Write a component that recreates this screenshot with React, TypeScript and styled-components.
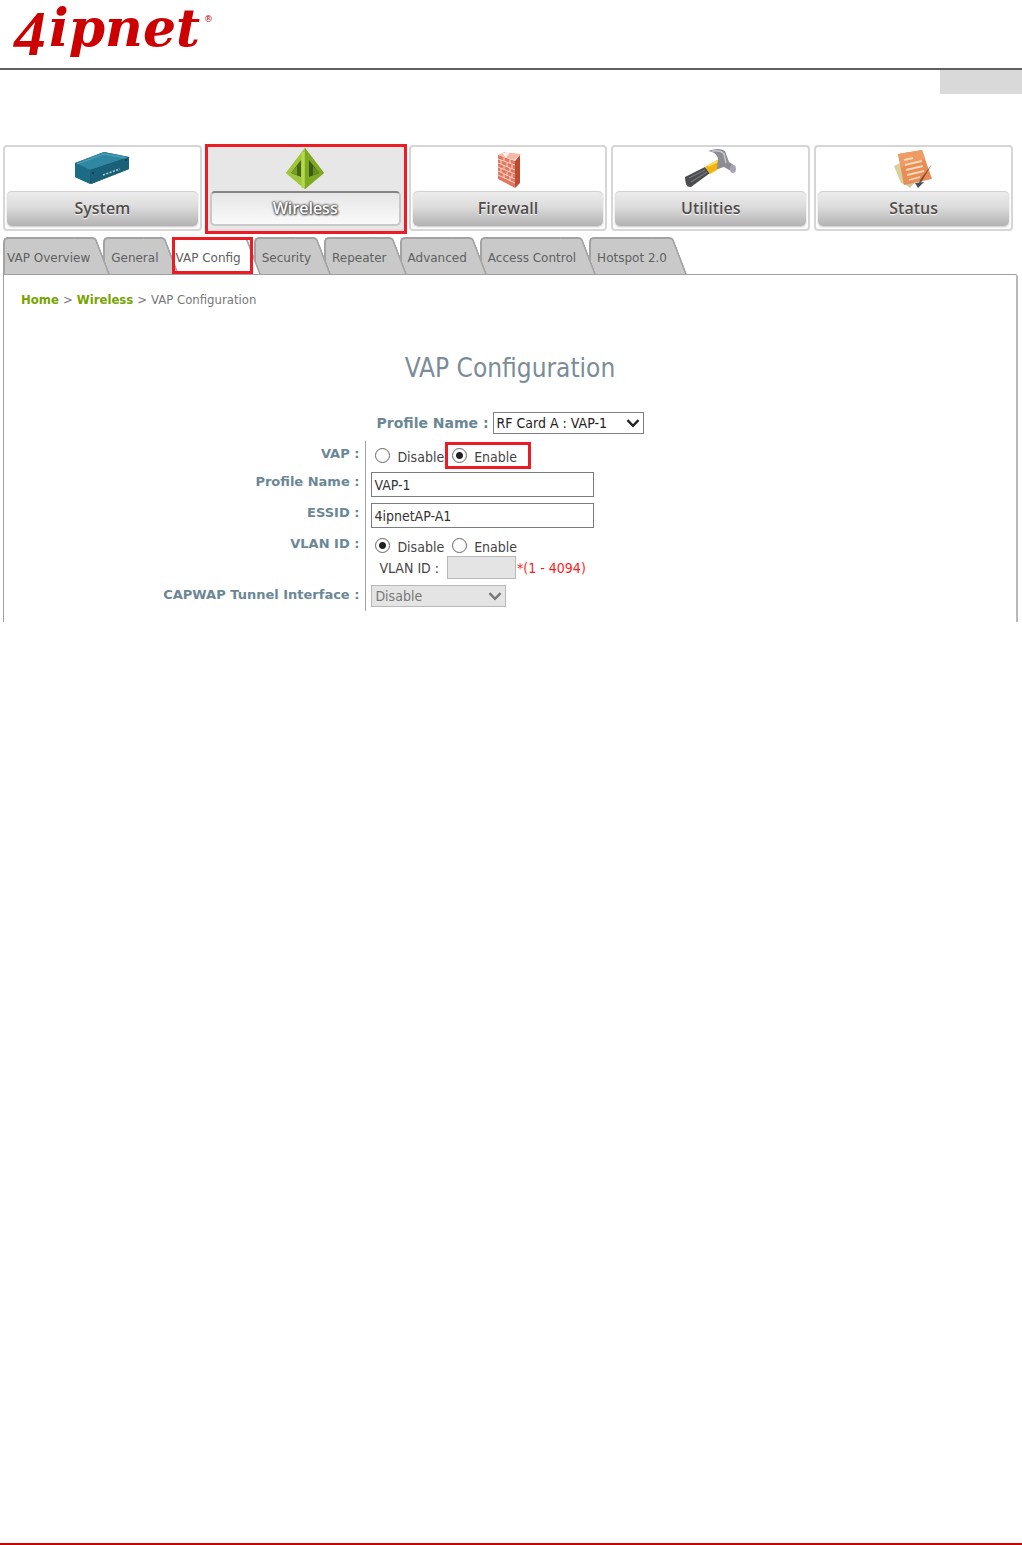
import React, { useState } from 'react';
import styled, { createGlobalStyle, css } from 'styled-components';

const ui = '"DejaVu Sans Condensed", "Noto Sans", sans-serif';
const uiWide = '"DejaVu Sans", sans-serif';
const accent = '#ed1c24';

const GlobalStyle = createGlobalStyle`
  * { box-sizing: border-box; }
  body { margin: 0; background: #fff; font-family: "Noto Sans", sans-serif; }
  button, input, select { font: inherit; color: inherit; margin: 0; }
`;

const Page = styled.div`
  display: flex;
  flex-direction: column;
  min-height: 100vh;
`;

const Header = styled.header`
  display: flex;
  padding-left: 13px;
  height: 70px;
  border-bottom: 2px solid #5f5f5f;
`;

const Logo = styled.svg`
  display: block;
  width: 204px;
  height: 68px;
  overflow: visible;
  fill: #cc0000;
  font-family: "DejaVu Serif", serif;
  font-weight: bold;
  font-style: italic;
`;

const PageTag = styled.div`
  align-self: flex-end;
  width: 82px;
  height: 24px;
  background: #d9d9d9;
`;

const Main = styled.main`
  padding: 51px 4px 0 3px;
`;

const Nav = styled.nav`
  display: grid;
  grid-template-columns: repeat(5, 1fr);
  gap: 4px;
  padding-right: 5px;
`;

const NavCard = styled.button<{ $active?: boolean }>`
  position: relative;
  display: flex;
  flex-direction: column;
  align-items: stretch;
  height: 86px;
  padding: 0 2px;
  border: 2px solid #d6d6d6;
  border-radius: 4px;
  background: #fff;
  cursor: pointer;
  ${(p) =>
    p.$active &&
    css`
      background: #e7e7e7;
      border-color: #e0e0e0;
      &::after {
        content: '';
        position: absolute;
        inset: -3px -4px -5px -3px;
        border: 3px solid ${accent};
      }
    `}
`;

const NavIcon = styled.svg`
  display: block;
  width: 60px;
  height: 44px;
  margin: 0 auto;
  flex: none;
`;

const NavLabel = styled.span<{ $active?: boolean }>`
  display: block;
  height: 35px;
  border-radius: 5px;
  font: 600 16px/35px "Open Sans", sans-serif;
  color: #504c4a;
  background: linear-gradient(#ededed, #dcdcdc 45%, #b2b2b2);
  box-shadow: 0 1px 2px #c4c4c4, inset 0 1px 0 #d2d2d2;
  text-shadow: 0 1px 1px #fff;
  ${(p) =>
    p.$active &&
    css`
      color: #fff;
      background: linear-gradient(#e6e6e6, #fafafa);
      border: 2px solid #c8c8c8;
      border-top-color: #858585;
      line-height: 30px;
      box-shadow: none;
      text-shadow: 0 0 2px #444, 0 0 2px #555, 1px 1px 2px #555, 0 0 3px #777;
    `}
`;

const Tabs = styled.div`
  display: flex;
  height: 37px;
  margin-top: 6px;
  position: relative;
  z-index: 0;
`;

const TabSlot = styled.div`
  position: relative;
`;

const Tab = styled.button<{ $active?: boolean; $tight?: boolean; $order: number }>`
  --fill: ${(p) => (p.$active ? '#fff' : '#c9c9c9')};
  --edge: #a3a3a3;
  display: block;
  position: relative;
  z-index: ${(p) => p.$order};
  height: 37px;
  padding: ${(p) => (p.$tight ? '2px 13px 0 4px' : '2px 13px 0 8px')};
  border: 0;
  background: none;
  font: 12px/38px ${uiWide};
  color: #606060;
  white-space: nowrap;
  cursor: pointer;
  &::before,
  &::after {
    content: '';
    position: absolute;
    z-index: -1;
    top: 0;
    bottom: 0;
    background: var(--fill);
    border-top: 2px solid var(--edge);
  }
  &::before {
    left: 0;
    right: 12px;
    border-left: 2px solid var(--edge);
    border-top-left-radius: 5px;
  }
  &::after {
    right: 0;
    width: 20px;
    border-right: 2px solid var(--edge);
    border-top-right-radius: 4px;
    transform: skewX(21deg);
  }
`;

const TabMark = styled.span`
  position: absolute;
  z-index: 20;
  inset: 0 1px 0 0;
  border: 3px solid ${accent};
  pointer-events: none;
`;

const Panel = styled.section`
  height: 348px;
  border: 1px solid #a0a0a0;
  border-right: 2px solid #b8b8b8;
  border-bottom: 0;
  border-top-right-radius: 3px;
`;

const Crumbs = styled.nav`
  display: flex;
  gap: 4px;
  padding: 15px 17px 0;
  font: 13px/20px ${ui};
  color: #777;
`;

const CrumbLink = styled.a`
  color: #78a300;
  font-weight: bold;
  text-decoration: none;
`;

const Title = styled.h1`
  margin: 38px 0 0;
  text-align: center;
  font: 26px/40px ${ui};
  color: #7b8c99;
`;

const ProfileRow = styled.div`
  display: flex;
  justify-content: center;
  align-items: center;
  gap: 4px;
  height: 22px;
  margin-top: 24px;
`;

const Caption = styled.label<{ $large?: boolean }>`
  font: bold ${(p) => (p.$large ? 14 : 13)}px/20px ${uiWide};
  color: #6b8796;
`;

const SelectBox = styled.div<{ $width: number; $muted?: boolean }>`
  position: relative;
  width: ${(p) => p.$width}px;
  height: 22px;
  font: 14px/20px ${ui};
  color: ${(p) => (p.$muted ? '#777' : '#222')};
  select {
    appearance: none;
    width: 100%;
    height: 22px;
    padding: 0 3px;
    border: 1px solid ${(p) => (p.$muted ? '#b8b8b8' : '#808080')};
    border-radius: 0;
    background: ${(p) => (p.$muted ? '#e4e4e4' : '#fff')};
    opacity: 1;
  }
  svg {
    position: absolute;
    top: 7px;
    right: 4px;
    pointer-events: none;
  }
`;

const Form = styled.form`
  margin-top: 7px;
`;

const Row = styled.div<{ $first?: boolean }>`
  display: grid;
  grid-template-columns: 5fr 9fr;
  && > * { padding-top: ${(p) => (p.$first ? 3 : 0)}px; }
`;

const LabelCell = styled.div`
  padding: 0 6px 6px 0;
  text-align: right;
  color: #6b8796;
  font: bold 13px/20px ${uiWide};
`;

const ValueCell = styled.div`
  padding: 0 0 6px 5px;
  border-left: 1px solid #a6a6a6;
`;

const LastValueCell = styled(ValueCell)`
  padding-bottom: 3px;
`;

const TextBox = styled.input`
  display: block;
  width: 223px;
  height: 25px;
  padding: 0 2px;
  border: 1px solid #7c7c7c;
  border-radius: 0;
  font: 14px/20px ${ui};
  color: #333;
`;

const Choices = styled.div`
  display: flex;
  height: 22px;
`;

const Choice = styled.label`
  position: relative;
  display: flex;
  align-items: center;
  gap: 7px;
  padding-left: 4px;
  margin-right: 4px;
  font: 14px/22px ${ui};
  color: #444;
  span { padding-top: 4px; }
  input {
    appearance: none;
    width: 15px;
    height: 15px;
    border: 1px solid #666;
    border-radius: 50%;
    background: #fff;
  }
  input:checked {
    background: radial-gradient(circle, #222 0 3px, #fff 4px);
  }
`;

const ChoiceMark = styled.i`
  position: absolute;
  inset: -2px -14px -3px -3px;
  border: 3px solid ${accent};
`;

const SubField = styled.div`
  display: flex;
  align-items: center;
  height: 23px;
  padding-left: 8px;
  font: 14px/22px ${ui};
  color: #444;
  input {
    width: 69px;
    height: 23px;
    margin: 0 1px 0 8px;
    border: 1px solid #b8b8b8;
    background: #e4e4e4;
  }
`;

const Hint = styled.span`
  color: #ff1a1a;
`;

const Footer = styled.footer`
  margin-top: auto;
  border-top: 2px solid #d00000;
`;

const Chevron = ({ color }: { color: string }) => (
  <svg width="14" height="9" viewBox="0 0 14 9" fill="none" stroke={color} strokeWidth="2.4">
    <path d="M1.5 1.2 7 6.8l5.500-5.600" />
  </svg>
);

const RouterIcon = () => (
  <NavIcon viewBox="0 0 60 44">
    <path d="M3 16 32 5l25 5v12L19 37 3 30z" fill="#17586d" />
    <path d="M3 16 32 5l25 5L18 23z" fill="#2f87a2" />
    <path d="M3 16l15 7v14L3 30z" fill="#1d6c86" />
    <path d="M18 23 57 10v12L19 37z" fill="#1b6079" />
    <path d="M31 28 48 22" stroke="#a9d3c8" strokeWidth="1.600" strokeDasharray="2 1.500" />
    <circle cx="21" cy="26" r="1" fill="#0c3543" />
    <circle cx="54" cy="13" r="1" fill="#0c3543" />
    <path d="M5 17 32 7l22 4" stroke="#53a6bd" fill="none" />
  </NavIcon>
);

const WirelessIcon = () => (
  <NavIcon viewBox="0 0 60 44">
    <path d="M30 1 49 26 30 42 11 26z" fill="#92bd2d" />
    <path d="M30 1 11 26l19 16z" fill="#9fc63c" />
    <path d="M30 1 49 26 30 42z" fill="#7fa823" />
    <path d="M26 13v17l-10-4z" fill="#47661a" />
    <path d="M34 13v17l10-4z" fill="#3c5a14" />
    <path d="M22 19v9l-6-2z" fill="#789d2b" />
    <path d="M38 19v9l6-2z" fill="#6a8d22" />
    <path d="M28 5v36" stroke="#b4d84f" strokeWidth="3" />
  </NavIcon>
);

const FirewallIcon = () => (
  <NavIcon viewBox="0 0 60 44">
    <path d="M20 8 26 5 43 7 36 13z" fill="#f5b7a6" />
    <path d="M20 8l17 6v27L20 32z" fill="#e2775f" />
    <path d="M37 14l5-6v28l-5 5z" fill="#bf4a32" />
    <g stroke="#fbd6ca" strokeWidth="1" fill="none">
      <path d="M20 12l17 6M20 16l17 7M20 20l17 7M20 24l17 8M20 28l17 8" />
      <path d="M26 10v4M32 12v4M23 13v4M29 16v4M34 18v4M26 18v4M32 21v4M23 21v4M29 25v4M34 27v4M26 27v4M32 30v4" />
    </g>
    <path d="M24 6l4 5 4-6z" fill="#fff" opacity=".75" />
  </NavIcon>
);

const HammerIcon = () => (
  <NavIcon viewBox="0 0 60 44">
    <path d="M4 30 24 20 29 26 10 40Q4 41 4 30z" fill="#4c4d50" />
    <path d="M8 31 24 23M10 35 26 25" stroke="#77787a" strokeWidth="1.200" />
    <path d="M24 20 36 13l5 7-12 7z" fill="#f2b211" />
    <path d="M27 19 37 14" stroke="#ffdc5c" strokeWidth="2" />
    <path d="M27 4Q38 0 44 4L48 15 54 19 50 24 43 20 36 22 37 11Q35 5 27 4z" fill="#8b8d92" />
    <path d="M31 4Q40 3 43 7L45 16" stroke="#c6c8cc" strokeWidth="1.500" fill="none" />
    <ellipse cx="52" cy="22" rx="3" ry="4" fill="#aaa4b8" />
  </NavIcon>
);

const StatusIcon = () => (
  <NavIcon viewBox="0 0 60 44">
    <path d="M10 19 16 16 22 38 17 36z" fill="#d8cf9b" />
    <path d="M20 36 32 34 26 41z" fill="#cfc795" />
    <path d="M14 7 38 3 48 32 20 38z" fill="#e88d58" />
    <path d="M14 7 38 3 41 12 17 20z" fill="#ef9b66" />
    <g stroke="#fbd9b9" strokeWidth="1.800">
      <path d="M20 13 29 11M21 18 38 14M22 23 39 19M23 28 40 24M25 33 36 30" />
    </g>
    <path d="M48 17 38 34 34 39 36 33z" fill="#8b4930" />
    <path d="M34 41 31 36 40 35z" fill="#45515b" />
  </NavIcon>
);

const sections = [
  { name: 'System', Icon: RouterIcon },
  { name: 'Wireless', Icon: WirelessIcon },
  { name: 'Firewall', Icon: FirewallIcon },
  { name: 'Utilities', Icon: HammerIcon },
  { name: 'Status', Icon: StatusIcon },
];

const tabs = [
  'VAP Overview',
  'General',
  'VAP Config',
  'Security',
  'Repeater',
  'Advanced',
  'Access Control',
  'Hotspot 2.0',
];

export default function App() {
  const [vap, setVap] = useState('Enable');
  const [vlan, setVlan] = useState('Disable');
  return (
    <Page>
      <GlobalStyle />
      <Header>
        <Logo viewBox="0 0 204 68" role="img" aria-label="4ipnet">
          <text x="1" y="55" fontSize="64" fontFamily="Liberation Serif">4</text>
          <text x="36" y="46" fontSize="52">ipnet</text>
          <text x="191" y="22" fontSize="9" fontWeight="normal" fontStyle="normal">®</text>
        </Logo>
      </Header>
      <PageTag />
      <Main>
        <Nav aria-label="Sections">
          {sections.map(({ name, Icon }) => (
            <NavCard key={name} type="button" $active={name === 'Wireless'}>
              <Icon />
              <NavLabel $active={name === 'Wireless'}>{name}</NavLabel>
            </NavCard>
          ))}
        </Nav>
        <Tabs>
          {tabs.map((name, i) => (
            <TabSlot key={name}>
              <Tab
                type="button"
                $active={name === 'VAP Config'}
                $tight={name.startsWith('VAP')}
                $order={tabs.length - i}
              >
                {name}
              </Tab>
              {name === 'VAP Config' && <TabMark />}
            </TabSlot>
          ))}
        </Tabs>
        <Panel>
          <Crumbs aria-label="Breadcrumb">
            <CrumbLink href="#home">Home</CrumbLink>
            <span>&gt;</span>
            <CrumbLink href="#wireless">Wireless</CrumbLink>
            <span>&gt;</span>
            <span>VAP Configuration</span>
          </Crumbs>
          <Title>VAP Configuration</Title>
          <ProfileRow>
            <Caption $large htmlFor="profile">Profile Name :</Caption>
            <SelectBox $width={151}>
              <select id="profile" defaultValue="a1">
                <option value="a1">RF Card A : VAP-1</option>
              </select>
              <Chevron color="#222" />
            </SelectBox>
          </ProfileRow>
          <Form>
            <Row $first>
              <LabelCell id="vap-label">VAP :</LabelCell>
              <ValueCell>
                <Choices role="radiogroup" aria-labelledby="vap-label">
                  {['Disable', 'Enable'].map((v) => (
                    <Choice key={v}>
                      <input type="radio" name="vap" checked={vap === v} onChange={() => setVap(v)} />
                      <span>{v}</span>
                      {v === 'Enable' && <ChoiceMark />}
                    </Choice>
                  ))}
                </Choices>
              </ValueCell>
            </Row>
            <Row>
              <LabelCell><Caption htmlFor="name">Profile Name :</Caption></LabelCell>
              <ValueCell><TextBox id="name" defaultValue="VAP-1" /></ValueCell>
            </Row>
            <Row>
              <LabelCell><Caption htmlFor="essid">ESSID :</Caption></LabelCell>
              <ValueCell><TextBox id="essid" defaultValue="4ipnetAP-A1" /></ValueCell>
            </Row>
            <Row>
              <LabelCell id="vlan-label">VLAN ID :</LabelCell>
              <ValueCell>
                <Choices role="radiogroup" aria-labelledby="vlan-label">
                  {['Disable', 'Enable'].map((v) => (
                    <Choice key={v}>
                      <input type="radio" name="vlan" checked={vlan === v} onChange={() => setVlan(v)} />
                      <span>{v}</span>
                    </Choice>
                  ))}
                </Choices>
                <SubField>
                  <label htmlFor="vlan-id">VLAN ID :</label>
                  <input id="vlan-id" disabled={vlan === 'Disable'} />
                  <Hint>*(1 - 4094)</Hint>
                </SubField>
              </ValueCell>
            </Row>
            <Row>
              <LabelCell><Caption htmlFor="capwap">CAPWAP Tunnel Interface :</Caption></LabelCell>
              <LastValueCell>
                <SelectBox $width={135} $muted>
                  <select id="capwap" disabled>
                    <option>Disable</option>
                  </select>
                  <Chevron color="#777" />
                </SelectBox>
              </LastValueCell>
            </Row>
          </Form>
        </Panel>
      </Main>
      <Footer />
    </Page>
  );
}
